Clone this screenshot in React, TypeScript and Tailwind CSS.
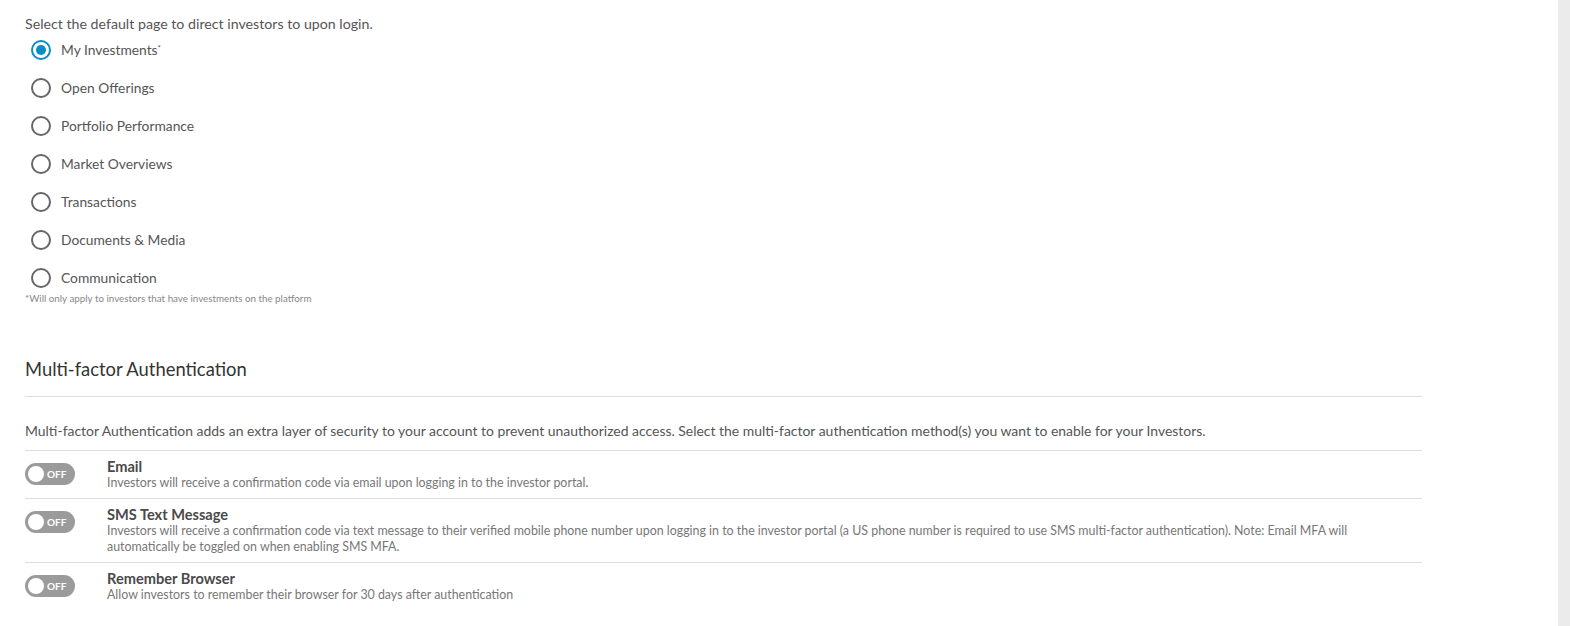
import React, { useState } from "react";

const pages = [
  "My Investments",
  "Open Offerings",
  "Portfolio Performance",
  "Market Overviews",
  "Transactions",
  "Documents & Media",
  "Communication",
];

const methods = [
  {
    title: "Email",
    desc: "Investors will receive a confirmation code via email upon logging in to the investor portal.",
  },
  {
    title: "SMS Text Message",
    desc: "Investors will receive a confirmation code via text message to their verified mobile phone number upon logging in to the investor portal (a US phone number is required to use SMS multi-factor authentication). Note: Email MFA will automatically be toggled on when enabling SMS MFA.",
  },
  {
    title: "Remember Browser",
    desc: "Allow investors to remember their browser for 30 days after authentication",
  },
];

const Toggle = () => (
  <div className="relative w-[50px] h-[22px] rounded-full bg-[#9b9b9b] shrink-0">
    <div className="absolute left-[3px] top-[3px] w-4 h-4 rounded-full bg-white" />
    <span className="absolute left-[22px] top-[4px] text-[10px] leading-[14px] font-bold text-white">OFF</span>
  </div>
);

const App = () => {
  const [selected, setSelected] = useState(0);

  return (
    <div className="flex min-h-[626px] bg-white font-['Lato',sans-serif] text-[#555]">
      <div className="flex-1 pl-[25px] pt-[15px]">
        <div className="w-[1397px]">
          <p className="text-[14.2px] leading-[18px]">Select the default page to direct investors to upon login.</p>
          <div className="flex flex-col -mt-[2px]">
            {pages.map((p, i) => (
              <label
                key={p}
                onClick={() => setSelected(i)}
                className="flex items-center h-[38px] pl-[6px] cursor-pointer"
              >
                {selected === i ? (
                  <span className="w-5 h-5 rounded-full border-2 border-[#0a8dc4] flex items-center justify-center">
                    <span className="w-[10px] h-[10px] rounded-full bg-[#0a8dc4]" />
                  </span>
                ) : (
                  <span className="w-5 h-5 rounded-full border-2 border-[#666]" />
                )}
                <span className="ml-[10px] text-[13.8px]">
                  {p}
                  {i === 0 && <sup className="text-[8px]">*</sup>}
                </span>
              </label>
            ))}
          </div>
          <p className="text-[9.8px] leading-[14px] text-[#888] -mt-[6px]">*Will only apply to investors that have investments on the platform</p>

          <h2 className="mt-[52px] text-[18.4px] leading-[24px] text-[#333] pb-[15px] border-b border-[#ddd]">Multi-factor Authentication</h2>
          <p className="mt-[24px] text-[13.95px] leading-[20px] pb-[9px] border-b border-[#ddd]">
            Multi-factor Authentication adds an extra layer of security to your account to prevent unauthorized access. Select the multi-factor authentication method(s) you want to enable for your Investors.
          </p>
          {methods.map((m, i) => (
            <div
              key={m.title}
              className={`flex items-start pt-[7px] pb-[7px] ${i < methods.length - 1 ? "border-b border-[#ddd]" : ""}`}
            >
              <div className="pt-[5px]">
                <Toggle />
              </div>
              <div className="ml-[32px] flex-1 pr-[50px]">
                <div className="text-[14.6px] font-bold text-[#4a4a4a] leading-[16px] pt-[1px]">{m.title}</div>
                <div className="text-[12.4px] text-[#777] leading-[16px]">{m.desc}</div>
              </div>
            </div>
          ))}
        </div>
      </div>
      <div className="w-[12px] bg-[#ebebeb]" />
    </div>
  );
};

export default App;
